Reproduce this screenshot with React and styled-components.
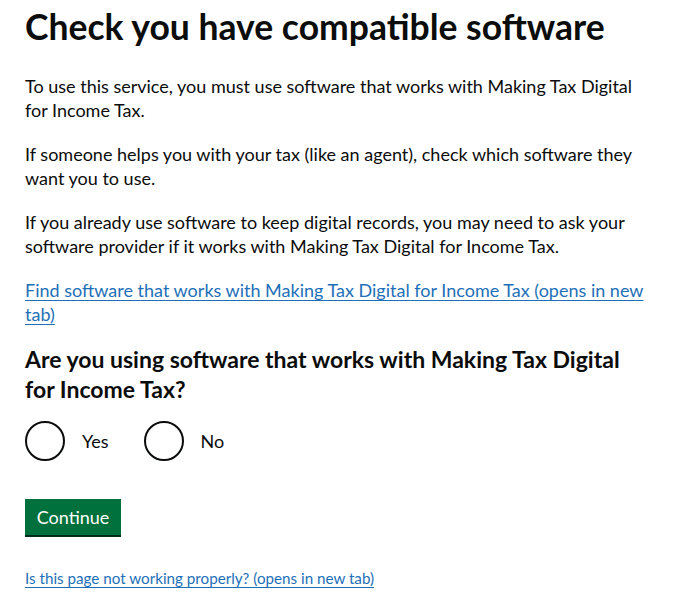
import styled, { createGlobalStyle } from "styled-components";

const GlobalStyle = createGlobalStyle`
  body {
    margin: 0;
    background: #ffffff;
    font-family: Lato, "Noto Sans", Arial, sans-serif;
    color: #0b0c0c;
  }
`;

const Main = styled.main`
  padding: 5px 25px 0;
  width: 625px;
`;

const Heading = styled.h1`
  font-size: 35.5px;
  font-weight: 700;
  line-height: 44px;
  margin: 0 0 25px;
  white-space: nowrap;
`;

const Body = styled.p`
  font-size: 18px;
  line-height: 24px;
  margin: 0 0 20px;
`;

const TextLink = styled.a`
  color: #1d70b8;
  text-decoration: underline;
  text-underline-offset: 3px;
  text-decoration-thickness: 1px;
  font-size: ${(p) => (p.$small ? "15.2px" : "18px")};
  line-height: 24px;
`;

const LinkPara = styled(Body)`
  margin-bottom: 18px;
`;

const Fieldset = styled.fieldset`
  border: 0;
  padding: 0;
  margin: 0 0 38px;
`;

const Legend = styled.legend`
  font-size: 23px;
  font-weight: 700;
  line-height: 30px;
  padding: 0;
  margin-bottom: 17px;
`;

const RadioRow = styled.div`
  display: flex;
  gap: 35px;
`;

const RadioItem = styled.label`
  display: flex;
  align-items: center;
  gap: 17px;
  font-size: 18px;
  cursor: pointer;
`;

const RadioCircle = styled.span`
  width: 40px;
  height: 40px;
  box-sizing: border-box;
  border: 2px solid #0b0c0c;
  border-radius: 50%;
`;

const Button = styled.button`
  display: block;
  background: #00703c;
  color: #ffffff;
  border: 0;
  box-shadow: 0 2px 0 #002d18;
  font-family: inherit;
  font-size: 18px;
  line-height: 22px;
  width: 96px;
  height: 36px;
  padding: 0;
  margin-bottom: 31px;
  cursor: pointer;
`;

const Footer = styled.div`
  line-height: 20px;
`;

export default function App() {
  return (
    <>
      <GlobalStyle />
      <Main>
        <Heading>Check you have compatible software</Heading>
        <Body>
          To use this service, you must use software that works with Making Tax
          Digital for Income Tax.
        </Body>
        <Body>
          If someone helps you with your tax (like an agent), check which
          software they want you to use.
        </Body>
        <Body>
          If you already use software to keep digital records, you may need to
          ask your software provider if it works with Making Tax Digital for
          Income Tax.
        </Body>
        <LinkPara>
          <TextLink href="#">
            Find software that works with Making Tax Digital for Income Tax
            (opens in new tab)
          </TextLink>
        </LinkPara>
        <Fieldset>
          <Legend>
            Are you using software that works with Making Tax Digital for Income
            Tax?
          </Legend>
          <RadioRow>
            <RadioItem>
              <RadioCircle />
              Yes
            </RadioItem>
            <RadioItem>
              <RadioCircle />
              No
            </RadioItem>
          </RadioRow>
        </Fieldset>
        <Button>Continue</Button>
        <Footer>
          <TextLink href="#" $small>
            Is this page not working properly? (opens in new tab)
          </TextLink>
        </Footer>
      </Main>
    </>
  );
}
